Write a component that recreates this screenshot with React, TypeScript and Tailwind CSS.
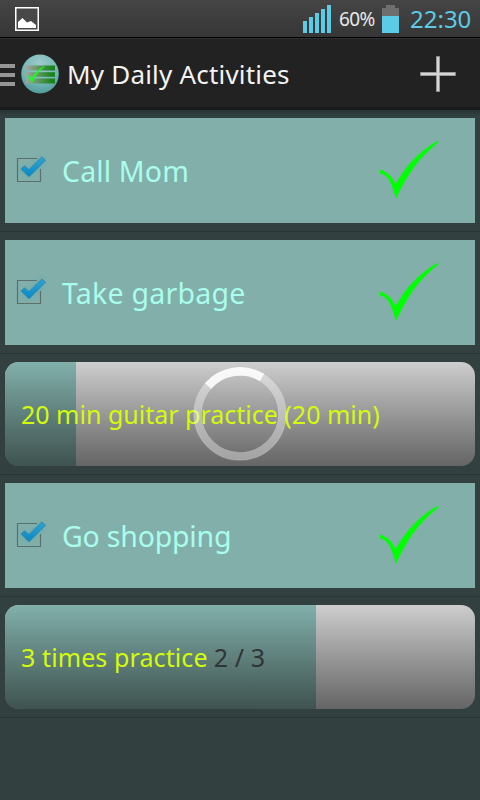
import React from "react";

const FONT = "font-['Noto_Sans','Open_Sans',sans-serif]";

function StatusBar() {
  return (
    <header className="flex h-[38px] shrink-0 items-start border-b border-black bg-linear-to-b from-[#454545] to-[#363636]">
      <svg className="mt-[7px] ml-[15px]" width="24" height="24" viewBox="0 0 24 24">
        <rect x="0.75" y="0.75" width="22.5" height="22.5" fill="#484848" stroke="#fff" strokeWidth="1.5" />
        <path d="M3 21V15L7.5 11L12 15.5L16 14L21 18V21Z" fill="#fff" />
      </svg>
      <svg className="mt-[5px] ml-[264px]" width="28" height="28" viewBox="0 0 28 28" fill="#5bcbe6">
        <rect x="0" y="16" width="4" height="12" />
        <rect x="6" y="12" width="4" height="16" />
        <rect x="12" y="8" width="4" height="20" />
        <rect x="18" y="4" width="4" height="24" />
        <rect x="24" y="0" width="4" height="28" />
      </svg>
      <span className="mt-[5px] ml-2 w-[43px] text-[19px] leading-[28px] tracking-[-0.6px] text-[#e8e8e8]">60%</span>
      <svg className="mt-[5px]" width="17" height="28" viewBox="0 0 17 28">
        <path d="M4 0H13V3H17V11H0V3H4Z" fill="#6e6e6e" />
        <rect y="11" width="17" height="17" fill="#5bcbe6" />
      </svg>
      <span className="mt-[3px] ml-[11px] text-[24px] leading-[32px] whitespace-nowrap text-[#5bcbe6]">22:30</span>
    </header>
  );
}

const CHECK =
  "M0 28.5C7 31 12 35 15.5 43C26 25 39 10 57.5 0L59 1C40 16 29 30 16 58C13 48 10 34 0 32.5Z";

function AppLogo() {
  return (
    <svg className="ml-[6px]" width="38" height="40" viewBox="0 0 38 40">
      <defs>
        <radialGradient id="disc" cx="0.5" cy="0.25" r="0.8">
          <stop offset="0" stopColor="#9ecbcb" />
          <stop offset="0.65" stopColor="#6fb3b3" />
          <stop offset="1" stopColor="#4b9494" />
        </radialGradient>
        <linearGradient id="bars" x1="0" x2="1">
          <stop offset="0" stopColor="#a6a6a6" />
          <stop offset="0.9" stopColor="#168418" />
        </linearGradient>
      </defs>
      <ellipse cx="19" cy="20" rx="18.8" ry="19.5" fill="url(#disc)" />
      <rect x="4.500" y="11.500" width="29.500" height="5" fill="url(#bars)" />
      <rect x="4.500" y="18.200" width="29.500" height="4.600" fill="url(#bars)" />
      <rect x="4.500" y="24.500" width="29.500" height="5" fill="url(#bars)" />
      <path d={CHECK} transform="translate(6 12.5) scale(0.29)" fill="#18ff18" stroke="#18ff18" strokeWidth="1.500" />
    </svg>
  );
}

function ActionBar() {
  return (
    <div className="flex h-[72px] shrink-0 items-center border-t border-b-[3px] border-t-[#303030] border-b-[#1a1a1a] bg-[#222] pt-[2px]">
      <div className="flex flex-col gap-[5px] pt-[2px]">
        <span className="h-1 w-[15px] bg-[#969696]" />
        <span className="h-1 w-[15px] bg-[#969696]" />
        <span className="h-1 w-[15px] bg-[#969696]" />
      </div>
      <AppLogo />
      <h1 className="ml-2 flex-1 text-[26px] leading-[36px] tracking-[0.2px] whitespace-nowrap text-[#f3f3f3]">My Daily Activities</h1>
      <svg className="mr-6" width="36" height="36" viewBox="0 0 36 36">
        <path d="M18 0V36M0 18H36" stroke="#858585" strokeWidth="4" />
        <path d="M18 1V35M1 18H35" stroke="#d6d6d6" strokeWidth="2.4" />
      </svg>
    </div>
  );
}

function Checkbox() {
  return (
    <svg className="mb-[4px] shrink-0" width="36" height="34" viewBox="0 0 36 34">
      <defs>
        <linearGradient id="tick" x1="0" y1="0" x2="0" y2="1">
          <stop offset="0" stopColor="#2ba5d8" />
          <stop offset="1" stopColor="#0789c7" />
        </linearGradient>
        <filter id="glow" x="-40%" y="-40%" width="180%" height="180%">
          <feGaussianBlur stdDeviation="2.5" />
        </filter>
      </defs>
      <path d="M25.500 17V29.500H2.500V6.500H22" fill="none" stroke="#5b6f6d" strokeWidth="1.200" />
      <path d="M8 16L13.500 21.500L28 7" fill="none" stroke="#35a5b8" strokeWidth="5" opacity="0.5" filter="url(#glow)" />
      <path d="M6 17L9.500 13.800L14 17.500L26.800 5L30.500 8.200L14 24.800Z" fill="url(#tick)" stroke="#3e7f9b" strokeWidth="0.8" />
    </svg>
  );
}

function DoneRow({ label, tracking }: { label: string; tracking: string }) {
  return (
    <li className="border-b border-[#283534] px-[5px] py-2">
      <div className="flex h-[105px] items-center bg-[#82afaa] pl-[10px]">
        <Checkbox />
        <span className={`ml-[11px] flex-1 text-[28.500px] leading-[38px] whitespace-nowrap text-[#a9fdec] ${tracking}`}>{label}</span>
        <svg className="mr-[36px] mb-[2px]" width="59" height="58" viewBox="0 0 59 58">
          <path d={CHECK} fill="#00ff00" />
        </svg>
      </div>
    </li>
  );
}

function ProgressRow({ fill, children }: { fill: string; children: React.ReactNode }) {
  return (
    <li className="border-b border-[#283534] px-[5px] py-2">
      <div className="relative flex h-[104px] items-center overflow-hidden rounded-[14px] bg-linear-to-b from-[#cecece] to-[#656565]">
        <div className={`absolute inset-y-0 left-0 bg-linear-to-b from-[#82b0ab] to-[#3f5350] ${fill}`} />
        {children}
      </div>
    </li>
  );
}

function Spinner() {
  return (
    <svg className="absolute top-[4px] left-[187px]" width="96" height="96" viewBox="0 0 96 96" fill="none">
      <circle cx="48" cy="48" r="42.200" stroke="#fff" strokeOpacity="0.38" strokeWidth="8" />
      <circle cx="48" cy="48" r="46.200" stroke="#fff" strokeOpacity="0.12" strokeWidth="1.500" />
      <path d="M16 20A42.500 42.500 0 0 1 70 11.500" stroke="#fff" strokeOpacity="0.82" strokeWidth="8.500" />
    </svg>
  );
}

export default function App() {
  return (
    <div className={`flex h-[800px] w-[480px] flex-col overflow-hidden bg-[#324140] ${FONT}`}>
      <StatusBar />
      <ActionBar />
      <ul className="bg-linear-to-b from-[#293433] to-[#324140] to-[6px]">
        <DoneRow label="Call Mom" tracking="tracking-[0.150px]" />
        <DoneRow label="Take garbage" tracking="tracking-[0.250px]" />
        <ProgressRow fill="w-[71px]">
          <span className="relative ml-[16px] pt-[2px] text-[25px] whitespace-nowrap text-[#d4fb0a]">20 min guitar practice (20 min)</span>
          <Spinner />
        </ProgressRow>
        <DoneRow label="Go shopping" tracking="tracking-[-0.200px]" />
        <ProgressRow fill="w-[311px]">
          <span className="relative ml-[16px] pt-[2px] text-[25px] tracking-[0.100px] whitespace-nowrap text-[#d4fb0a]">3 times practice</span>
          <span className="relative ml-[6px] pt-[2px] text-[25px] tracking-[0.150px] whitespace-nowrap text-[#303535]">2 / 3</span>
        </ProgressRow>
      </ul>
    </div>
  );
}
